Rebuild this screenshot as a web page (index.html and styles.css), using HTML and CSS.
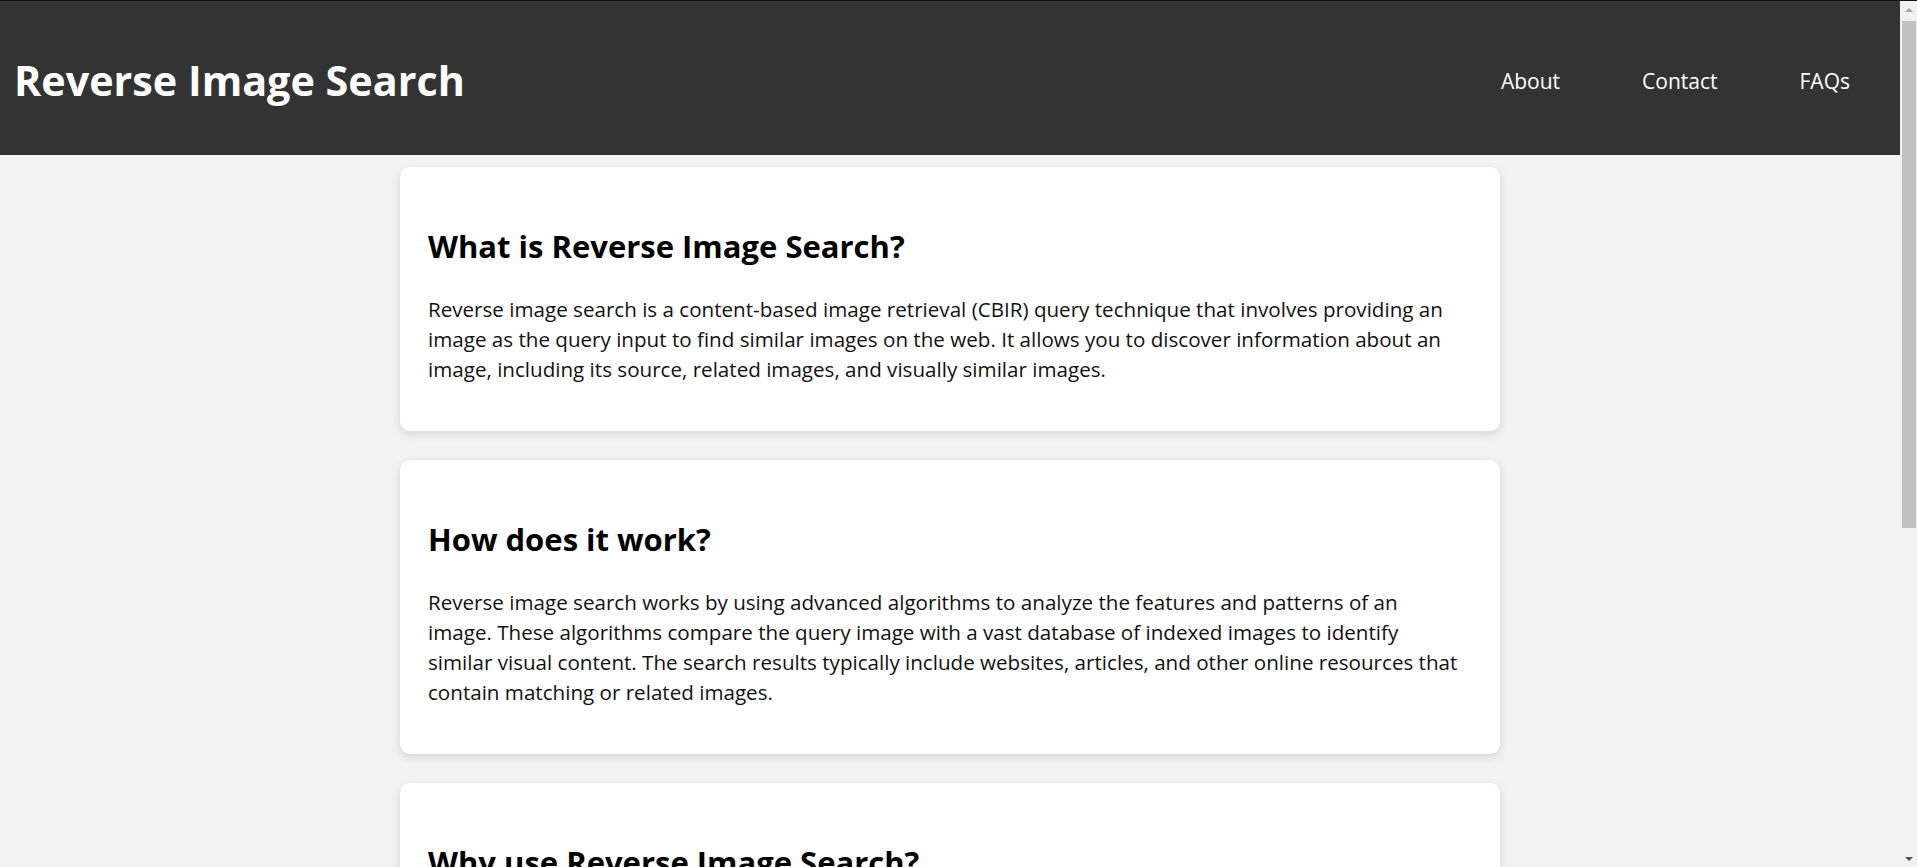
FILE: index.html
```html
<!DOCTYPE html>
<html lang="en">
<head>
<meta charset="utf-8">
<title>Reverse Image Search</title>
<link rel="stylesheet" href="styles.css">
</head>
<body>
<div class="page">
  <header class="site-header">
    <h1 class="brand">Reverse Image Search</h1>
    <nav class="nav">
      <a href="#" class="nav-link">About</a>
      <a href="#" class="nav-link">Contact</a>
      <a href="#" class="nav-link">FAQs</a>
    </nav>
  </header>
  <main class="content">
    <section class="card">
      <h2 class="card-title">What is Reverse Image Search?</h2>
      <p class="card-text">Reverse image search is a content-based image retrieval (CBIR) query technique that involves providing an image as the query input to find similar images on the web. It allows you to discover information about an image, including its source, related images, and visually similar images.</p>
    </section>
    <section class="card">
      <h2 class="card-title">How does it work?</h2>
      <p class="card-text">Reverse image search works by using advanced algorithms to analyze the features and patterns of an<br>image. These algorithms compare the query image with a vast database of indexed images to identify<br>similar visual content. The search results typically include websites, articles, and other online resources that contain matching or related images.</p>
    </section>
    <section class="card">
      <h2 class="card-title">Why use Reverse Image Search?</h2>
      <p class="card-text">Reverse image search can help you find the original source of an image, verify its authenticity, discover higher-resolution versions, identify products, landmarks, plants or animals, and track down where your own images are being used across the web without permission.</p>
    </section>
    <section class="card">
      <h2 class="card-title">Get started</h2>
      <p class="card-text">Upload an image or paste its URL to begin searching. Results are gathered from multiple sources to give you the most relevant matches.</p>
    </section>
  </main>
</div>
<div class="scrollbar" aria-hidden="true">
  <div class="sb-button sb-up"></div>
  <div class="sb-track"><div class="sb-thumb"></div></div>
  <div class="sb-button sb-down"></div>
</div>
</body>
</html>
```
FILE: styles.css
```css
html {
  border-top: 1px solid #111;
}
body {
  margin: 0;
  background: #f2f2f2;
  font-family: "Open Sans", "Noto Sans", sans-serif;
  color: #111;
  display: flex;
  align-items: flex-start;
}
.page {
  flex: 1;
  min-width: 0;
}
.site-header {
  background: #333;
  height: 154px;
  box-sizing: border-box;
  display: flex;
  align-items: center;
  justify-content: space-between;
  padding: 5px 50px 0 14px;
}
.brand {
  margin: 0;
  color: #fff;
  font-size: 41.3px;
  font-weight: 700;
  line-height: 1;
}
.nav {
  display: flex;
  gap: 82px;
}
.nav-link {
  color: #fff;
  text-decoration: none;
  font-size: 21px;
}
.content {
  display: flex;
  flex-direction: column;
  align-items: center;
  gap: 29px;
  padding: 12px 0 40px;
}
.card {
  width: 1100px;
  box-sizing: border-box;
  background: #fff;
  border-radius: 10px;
  box-shadow: 0 3px 10px rgba(0, 0, 0, 0.12);
  padding: 28px;
}
.card-title {
  margin: 31px 0 28px;
  font-size: 31px;
  line-height: 40px;
  font-weight: 700;
  color: #000;
}
.card-text {
  margin: 0 0 19px;
  font-size: 20.6px;
  line-height: 30px;
}
.scrollbar {
  width: 17px;
  height: calc(100vh - 1px);
  flex-shrink: 0;
  background: #f1f1f1;
  display: flex;
  flex-direction: column;
}
.sb-button {
  height: 17px;
  flex-shrink: 0;
  display: flex;
  align-items: center;
  justify-content: center;
}
.sb-button::before {
  content: "";
  width: 0;
  height: 0;
  border-left: 4px solid transparent;
  border-right: 4px solid transparent;
}
.sb-up::before {
  border-bottom: 4px solid #a3a3a3;
}
.sb-down::before {
  border-top: 4px solid #505050;
}
.sb-track {
  flex: 1;
  padding: 3px 1px 0 2px;
}
.sb-thumb {
  height: 507px;
  background: #c1c1c1;
}
```
